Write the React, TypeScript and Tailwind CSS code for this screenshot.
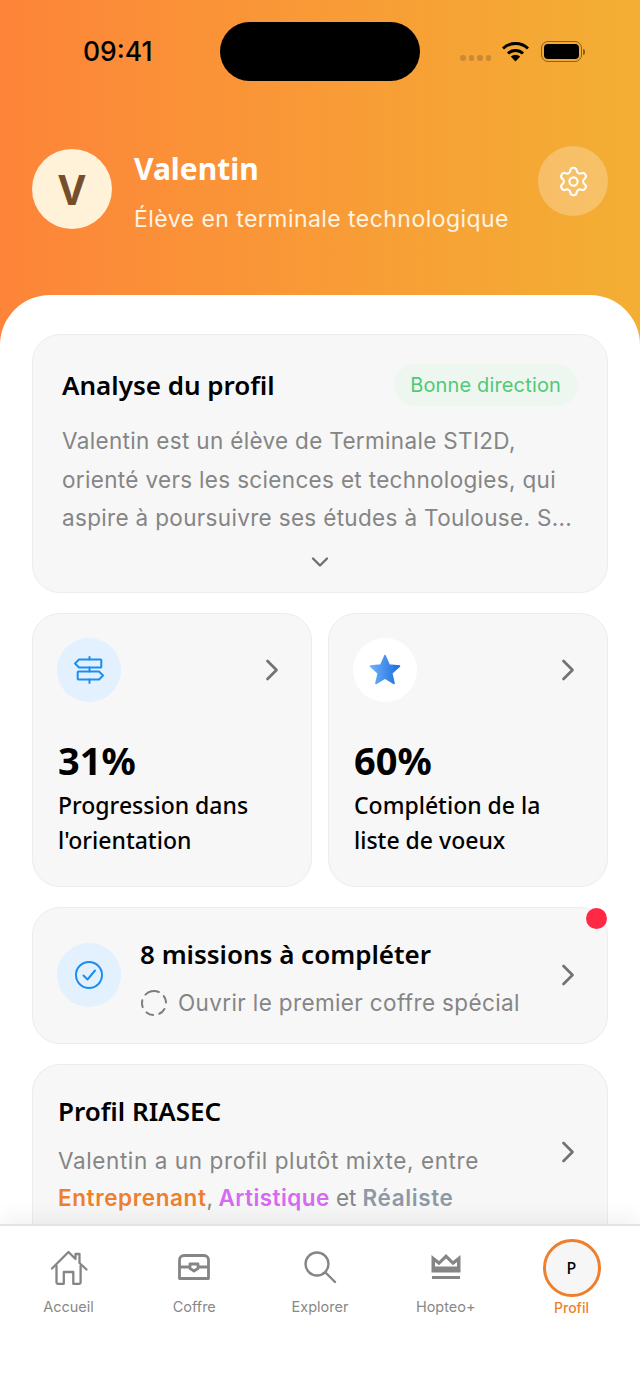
import { ChevronDown, ChevronRight, Settings } from "lucide-react";

const body = "font-['Inter','Noto_Sans',sans-serif]";
const head = "font-['Noto_Sans','Open_Sans',sans-serif]";

function Signpost() {
  return (
    <svg width="30" height="28" viewBox="0 0 30 28" fill="none" stroke="#1a8ff0" strokeWidth="2" strokeLinejoin="round" strokeLinecap="round">
      <path d="M15.500 1v2.500M15.500 11.500v4M15.500 23.500V27" />
      <path d="M5 3.500h21.500a.8.8 0 0 1 .8.8v6.400a.8.8 0 0 1-.8.8H5L1 7.500z" />
      <path d="M4.500 15.500H25l4 4-4 4H4.500a.8.8 0 0 1-.8-.8v-6.400a.8.8 0 0 1 .8-.8z" />
    </svg>
  );
}

function Star() {
  return (
    <svg width="32" height="32" viewBox="0 0 32 32">
      <defs>
        <linearGradient id="starFill" x1="0" x2="1" y1="0" y2="0">
          <stop offset="0" stopColor="#6fb0f7" />
          <stop offset="1" stopColor="#1c6fe0" />
        </linearGradient>
      </defs>
      <path
        d="M16 1.500l4.200 9.600 10.300 1-7.700 7 2.300 10.400-9.100-5.500-9.100 5.500 2.300-10.400-7.700-7 10.300-1z"
        fill="url(#starFill)"
        stroke="url(#starFill)"
        strokeWidth="1.500"
        strokeLinejoin="round"
      />
    </svg>
  );
}

function DashedCircle() {
  return (
    <svg width="28" height="28" viewBox="0 0 28 28" fill="none" stroke="#7c7c7c" strokeWidth="2" strokeLinecap="round" strokeDasharray="7 6.500">
      <circle cx="14" cy="14" r="12" transform="rotate(-100 14 14)" />
    </svg>
  );
}

function CheckCircle() {
  return (
    <svg width="30" height="30" viewBox="0 0 30 30" fill="none" stroke="#1a8ff0" strokeWidth="2" strokeLinecap="round" strokeLinejoin="round">
      <circle cx="15" cy="15" r="13" />
      <path d="M9.500 15.500l4 4 7.500-9" />
    </svg>
  );
}

function House() {
  return (
    <svg width="38" height="35" viewBox="0 0 38 35" fill="none" stroke="#858585" strokeWidth="2.300" strokeLinejoin="round" strokeLinecap="round">
      <path d="M2 18.500L18.500 2l7 7V4h4v9l7 6.500" />
      <path d="M6.500 16v16.500c0 .8.500 1.300 1.300 1.300h6V22h9.500v11.800h6c.8 0 1.300-.5 1.300-1.300V16" />
    </svg>
  );
}

function Chest() {
  return (
    <svg width="32" height="26" viewBox="0 0 32 26" fill="none" stroke="#858585" strokeWidth="2.800" strokeLinejoin="round">
      <path d="M1.500 6c0-2.500 2-4.500 4.500-4.500h20c2.500 0 4.500 2 4.500 4.500v18.500h-29z" />
      <path d="M1.500 13h10.500M20 13h10.500" />
      <path d="M12 10h8v4.500l-4 2.500-4-2.500z" />
    </svg>
  );
}

function SearchGlass() {
  return (
    <svg width="33" height="32" viewBox="0 0 33 32" fill="none" stroke="#858585" strokeWidth="2.400" strokeLinecap="round">
      <circle cx="13" cy="13" r="11.500" />
      <path d="M22 22l9 9" />
    </svg>
  );
}

function Crown() {
  return (
    <svg width="30" height="26" viewBox="0 0 30 26">
      <path
        fill="#858585"
        fillRule="evenodd"
        d="M.5 1L8 7l7-7 7 7 7.500-6v17.500H.5zM4 8v4.500h22V8l-4 3.200-7-6.700-7 6.700z"
      />
      <path d="M1 22h28v3H1z" fill="#858585" />
    </svg>
  );
}

function StatusBar() {
  return (
    <div className="flex items-center pt-[22px] pl-[83px] pr-[55px]">
      <span className="w-[137px] font-['Inter',sans-serif] text-[26.500px] font-medium leading-[59px] text-black">09:41</span>
      <div className="h-[59px] w-[200px] rounded-[30px] bg-black" />
      <div className="flex flex-1 items-center justify-end gap-[14px]">
        <div className="mt-[13px] flex gap-[3px]">
          <span className="size-[5.500px] rounded-full bg-[#c98a35]" />
          <span className="size-[5.500px] rounded-full bg-[#c98a35]" />
          <span className="size-[5.500px] rounded-full bg-[#c98a35]" />
          <span className="size-[5.500px] rounded-full bg-[#c98a35]" />
        </div>
        <svg width="27" height="21" viewBox="0 0 27 21" className="-ml-[3px] mb-[1px]">
          <path d="M1 7.500a18 18 0 0 1 25 0" fill="none" stroke="#000" strokeWidth="3" />
          <path d="M6 12.500a11 11 0 0 1 15 0" fill="none" stroke="#000" strokeWidth="3" />
          <path d="M8.800 15.500a7 7 0 0 1 9.400 0L13.500 20.500z" fill="#000" />
        </svg>
        <div className="-ml-[2px] flex items-center gap-[1px]">
          <div className="flex h-[21px] w-[41px] items-center justify-center rounded-[7px] border border-[#8a6018]">
            <div className="h-[15px] w-[35px] rounded-[4px] bg-black" />
          </div>
          <span className="h-[6px] w-[2px] rounded-r-full bg-[#8a6018]" />
        </div>
      </div>
    </div>
  );
}

function ProfileHeader() {
  return (
    <div className="flex items-start pl-[32px] pr-[32px] pt-[68px]">
      <div className="flex size-[80px] shrink-0 items-center justify-center rounded-full bg-[#fff2d9]">
        <span className={`${head} text-[42px] font-bold leading-none text-[#754f2b]`}>V</span>
      </div>
      <div className="ml-[22px] flex-1">
        <div className={`${head} text-[30px] font-bold leading-[40px] text-white`}>Valentin</div>
        <div className={`${body} mt-[15px] text-[23px] leading-[30px] tracking-[0.45px] text-[#fff3e2]`}>Élève en terminale technologique</div>
      </div>
      <div className="-mt-[3px] flex size-[70px] shrink-0 items-center justify-center rounded-full bg-white/25">
        <Settings size={33} strokeWidth={1.5} className="text-white" />
      </div>
    </div>
  );
}

function AnalysisCard() {
  return (
    <div className="rounded-[28px] border border-[#ececec] bg-[#f7f7f7] px-[29px] pt-[29px] pb-[16px]">
      <div className="flex items-center justify-between">
        <h2 className={`${head} text-[26px] font-semibold text-black`}>Analyse du profil</h2>
        <span className={`${body} rounded-full bg-[#edf7ef] pl-[16px] pr-[17px] py-[7px] text-[20px] leading-[28px] tracking-[0.15px] text-[#52c878]`}>Bonne direction</span>
      </div>
      <p className={`${body} mt-[16px] text-[22.500px] leading-[38.500px] tracking-[0.33px] text-[#858585]`}>
        Valentin est un élève de Terminale STI2D,
        <br />
        orienté vers les sciences et technologies, qui
        <br />
        aspire à poursuivre ses études à Toulouse. S...
      </p>
      <div className="mt-[10px] flex justify-center">
        <ChevronDown size={28} strokeWidth={2} className="text-[#6e6e6e]" />
      </div>
    </div>
  );
}

function CardChevron({ className = "" }: { className?: string }) {
  return <ChevronRight size={36} strokeWidth={1.8} className={`-mr-[3px] shrink-0 text-[#737373] ${className}`} />;
}

function StatCard({ iconBg, icon, value, label }: { iconBg: string; icon: React.ReactNode; value: string; label: string[] }) {
  return (
    <div className="flex-1 rounded-[28px] border border-[#ececec] bg-[#f7f7f7] pl-[25px] pr-[24px] pt-[24px] pb-[28px]">
      <div className="flex items-center justify-between">
        <div className={`-ml-[1px] flex size-[64px] items-center justify-center rounded-full ${iconBg}`}>{icon}</div>
        <CardChevron />
      </div>
      <div className={`${head} mt-[31px] text-[38px] font-bold leading-[55px] text-black`}>{value}</div>
      <div className={`${head} text-[23px] font-medium leading-[35px] text-black`}>
        {label.map((l) => (
          <div key={l}>{l}</div>
        ))}
      </div>
    </div>
  );
}

function MissionsCard() {
  return (
    <div className="relative flex items-center rounded-[28px] border border-[#ececec] bg-[#f7f7f7] pl-[24px] pr-[24px] pt-[27px] pb-[24px]">
      <div className="-mt-[4px] flex size-[64px] shrink-0 items-center justify-center rounded-full bg-[#e3f0fe]">
        <CheckCircle />
      </div>
      <div className="ml-[19px] flex-1">
        <div className={`${head} text-[26px] font-semibold leading-[38px] text-black`}>8 missions à compléter</div>
        <div className="mt-[14px] flex items-center gap-[10px]">
          <DashedCircle />
          <span className={`${body} text-[22.500px] leading-[32px] tracking-[0.37px] text-[#858585]`}>Ouvrir le premier coffre spécial</span>
        </div>
      </div>
      <CardChevron className="-mt-[4px]" />
      <span className="absolute top-0 right-0 size-[21px] rounded-full bg-[#ff2845]" />
    </div>
  );
}

function RiasecCard() {
  return (
    <div className="rounded-t-[28px] border border-b-0 border-[#ececec] bg-[#f7f7f7] pl-[25px] pr-[24px] pt-[27px] pb-[40px]">
      <div className="flex items-start justify-between">
        <div>
          <h2 className={`${head} text-[26px] font-semibold leading-[38px] text-black`}>Profil RIASEC</h2>
          <p className={`${body} mt-[12px] text-[22.500px] leading-[37px] tracking-[0.6px] text-[#858585]`}>
            Valentin a un profil plutôt mixte, entre
            <br />
            <span className="font-semibold text-[#ee7f2d]">Entreprenant</span>
            <span className="tracking-[-0.4px]">, </span>
            <span className="font-semibold tracking-[0.45px] text-[#d46bf0]">Artistique</span>
            <span className="tracking-[-0.1px]"> et </span>
            <span className="font-semibold text-[#8d99a6]">Réaliste</span>
          </p>
        </div>
        <CardChevron className="mt-[42px]" />
      </div>
    </div>
  );
}

function NavItem({ icon, label }: { icon: React.ReactNode; label: string }) {
  return (
    <div className="flex w-[120px] flex-col items-center">
      <div className="flex h-[50px] items-center justify-center">{icon}</div>
      <span className={`${body} mt-[5px] text-[14.500px] leading-[20px] text-[#888888]`}>{label}</span>
    </div>
  );
}

function BottomNav() {
  return (
    <nav className="relative flex h-[167px] shrink-0 items-start justify-between border-t-2 border-[#e4e4e4] bg-white px-[8.500px] pt-[16px] shadow-[0_-8px_18px_rgba(0,0,0,0.05)]">
      <NavItem icon={<House />} label="Accueil" />
      <NavItem icon={<Chest />} label="Coffre" />
      <NavItem icon={<SearchGlass />} label="Explorer" />
      <NavItem icon={<Crown />} label="Hopteo+" />
      <div className="flex w-[120px] flex-col items-center">
        <div className="-mt-[3px] flex size-[58px] items-center justify-center rounded-full border-[3px] border-[#ee7f2d] bg-[#f6f6f6]">
          <span className={`${head} text-[16px] font-medium text-black`}>P</span>
        </div>
        <span className={`${body} mt-[1px] text-[14px] font-medium leading-[20px] text-[#ee7f2d]`}>Profil</span>
      </div>
    </nav>
  );
}

export default function App() {
  return (
    <div className="flex h-[1391px] w-[640px] flex-col overflow-hidden bg-white">
      <div className="flex min-h-0 flex-1 flex-col bg-gradient-to-r from-[#fd8439] to-[#f3af33]">
        <StatusBar />
        <ProfileHeader />
        <main className="mt-[61px] flex min-h-0 flex-1 flex-col gap-[20px] overflow-hidden rounded-t-[50px] bg-white px-[32px] pt-[39px]">
          <AnalysisCard />
          <div className="flex gap-[16px]">
            <StatCard iconBg="bg-[#e3f0fe]" icon={<Signpost />} value="31%" label={["Progression dans", "l'orientation"]} />
            <StatCard iconBg="bg-white" icon={<Star />} value="60%" label={["Complétion de la", "liste de voeux"]} />
          </div>
          <MissionsCard />
          <RiasecCard />
        </main>
      </div>
      <BottomNav />
    </div>
  );
}
